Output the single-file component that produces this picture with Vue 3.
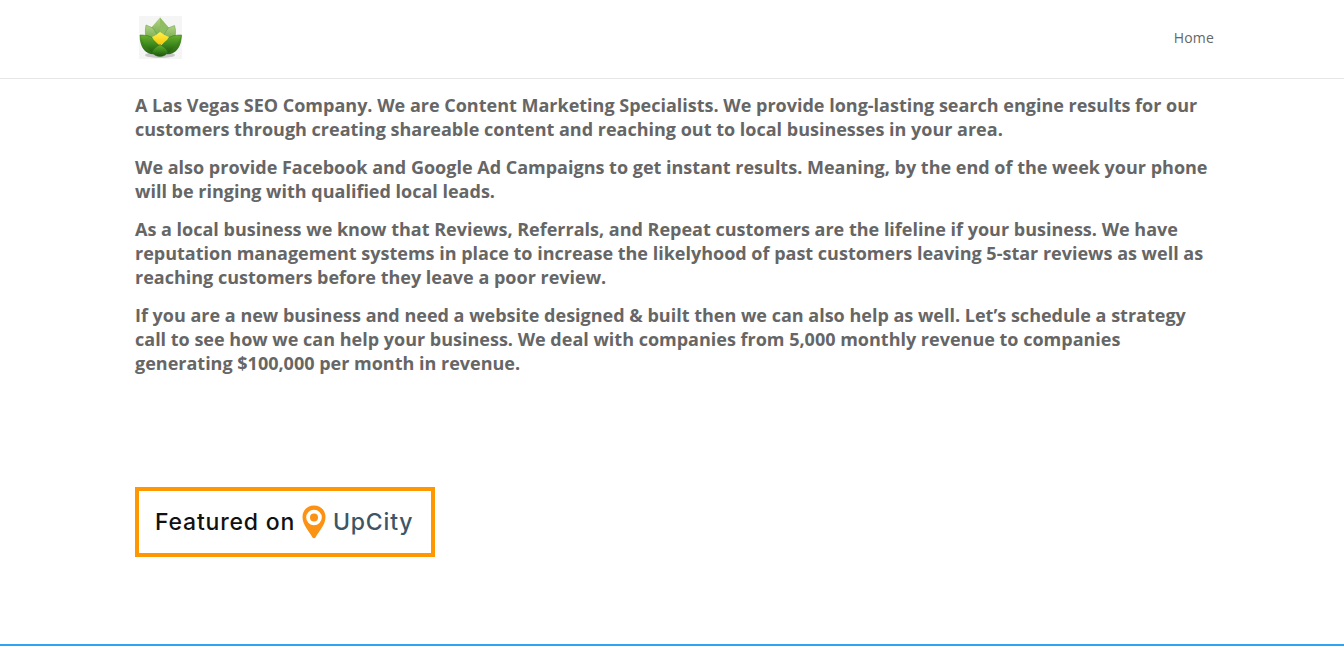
<script setup>
const paragraphs = [
  'A Las Vegas SEO Company. We are Content Marketing Specialists. We provide long-lasting search engine results for our customers through creating shareable content and reaching out to local businesses in your area.',
  'We also provide Facebook and Google Ad Campaigns to get instant results. Meaning, by the end of the week your phone will be ringing with qualified local leads.',
  'As a local business we know that Reviews, Referrals, and Repeat customers are the lifeline if your business. We have reputation management systems in place to increase the likelyhood of past customers leaving 5-star reviews as well as reaching customers before they leave a poor review.',
  'If you are a new business and need a website designed & built then we can also help as well. Let’s schedule a strategy call to see how we can help your business. We deal with companies from 5,000 monthly revenue to companies generating $100,000 per month in revenue.'
]
</script>

<template>
  <div class="page">
    <header class="site-header">
      <div class="container header-row">
        <svg class="logo" width="43" height="43" viewBox="0 0 43 43">
          <defs>
            <linearGradient id="leafDark" x1="0" y1="0" x2="0" y2="1">
              <stop offset="0" stop-color="#6cb032" />
              <stop offset="0.5" stop-color="#3d8a1c" />
              <stop offset="1" stop-color="#1c520e" />
            </linearGradient>
            <linearGradient id="leafShade" x1="0" y1="0" x2="0" y2="1">
              <stop offset="0" stop-color="#549a26" />
              <stop offset="1" stop-color="#2a6a14" />
            </linearGradient>
            <linearGradient id="leafLight" x1="0" y1="0" x2="0" y2="1">
              <stop offset="0" stop-color="#b2d386" />
              <stop offset="1" stop-color="#74a94a" />
            </linearGradient>
            <linearGradient id="heart" x1="0" y1="0" x2="0" y2="1">
              <stop offset="0" stop-color="#fff24e" />
              <stop offset="1" stop-color="#f5c400" />
            </linearGradient>
          </defs>
          <rect width="43" height="43" fill="#f5f5f5" />
          <ellipse cx="21" cy="39" rx="15" ry="3" fill="#9a9a9a" opacity="0.5" />
          <!-- back leaves -->
          <path d="M21 1.5 L30 12 L27 21 L15 21 L12 12 Z" fill="url(#leafLight)" />
          <path d="M21 1.5 L30 12 L27 21 L21 21 Z" fill="#8fbd62" />
          <path d="M7 9 L14 12 L20 22 L8 24 C6 19 6 14 7 9 Z" fill="url(#leafLight)" stroke="#5f9a38" stroke-width="0.5" />
          <path d="M35.5 9.5 L29 12 L23 22 L35 24 C37 19 37 14 35.5 9.5 Z" fill="url(#leafLight)" stroke="#5f9a38" stroke-width="0.5" />
          <!-- front leaves -->
          <path d="M1 19 C7 19 13 20 16 24 L21 30 L15 38 C7 38 1 32 1 19 Z" fill="url(#leafDark)" stroke="#2a6a14" stroke-width="0.5" />
          <path d="M1 19 C4 27 8 33 15 38 C7 38 1 32 1 19 Z" fill="url(#leafShade)" />
          <path d="M42.5 19 C36 19 30 20 27 24 L22 30 L28 38 C36 38 42 32 42.5 19 Z" fill="url(#leafDark)" stroke="#2a6a14" stroke-width="0.5" />
          <path d="M42.5 19 C39 27 35 33 28 38 C36 38 42 32 42.5 19 Z" fill="url(#leafShade)" />
          <path d="M13 21 C16 20 18 18 21 16 C24 18 27 20 30 21 C28 25 24 27 21 29.5 C18 27 15 25 13 21 Z" fill="url(#heart)" />
          <path d="M21 28.5 C24 30 28 33 29 36.5 C27 39 24 40.5 21 40.5 C18 40.5 15 39 13 36.5 C14 33 18 30 21 28.5 Z" fill="url(#leafDark)" stroke="#2a6a14" stroke-width="0.5" />
        </svg>
        <nav class="nav"><a class="nav-link">Home</a></nav>
      </div>
    </header>

    <main class="content container">
      <p v-for="(text, i) in paragraphs" :key="i" class="para">{{ text }}</p>

      <div class="badge">
        <span class="badge-text">Featured on</span>
        <svg class="pin" width="26" height="34" viewBox="0 0 26 34">
          <path d="M13 0.5 C6 0.5 1.5 5.5 1.5 12 C1.5 20 8 26 11.5 32.5 C12.2 33.6 13.8 33.6 14.5 32.5 C18 26 24.5 20 24.5 12 C24.5 5.5 20 0.5 13 0.5 Z" fill="#fb9213" />
          <circle cx="13" cy="12.5" r="7.8" fill="#fff" />
          <circle cx="13" cy="12.5" r="4" fill="#fb9213" />
        </svg>
        <span class="badge-brand">UpCity</span>
      </div>
    </main>

    <footer class="footer-line"></footer>
  </div>
</template>

<style scoped>
.page {
  display: flex;
  flex-direction: column;
  height: 646px;
  overflow: hidden;
  background: #fff;
  font-family: "Open Sans", Arial, sans-serif;
}

.container {
  width: 1074px;
  margin: 0 auto;
  box-sizing: border-box;
}

.site-header {
  height: 79px;
  flex: none;
  box-sizing: border-box;
  border-bottom: 1px solid #e6e6e6;
}

.header-row {
  display: flex;
  justify-content: space-between;
  align-items: flex-start;
  padding: 16px 0 0 4px;
}

.logo {
  display: block;
}

.nav {
  margin-right: -5px;
  padding-top: 10px;
}

.nav-link {
  font-size: 14px;
  font-weight: 400;
  line-height: 18px;
  letter-spacing: 0.2px;
  color: #666;
}

.content {
  flex: 1;
  padding-top: 14px;
}

.para {
  margin: 0 0 14px;
  font-size: 18px;
  font-weight: 700;
  line-height: 24px;
  color: #666;
}

.badge {
  display: flex;
  align-items: center;
  width: 300px;
  height: 70px;
  margin-top: 112px;
  box-sizing: border-box;
  padding-left: 16px;
  border: 4px solid #ff9800;
  font-family: Inter, Arial, sans-serif;
  font-size: 23px;
  font-weight: 500;
  letter-spacing: 0.8px;
}

.badge-text {
  color: #111;
}

.pin {
  margin: 0 6px;
  flex: none;
}

.badge-brand {
  color: #3d5566;
}

.footer-line {
  height: 2px;
  flex: none;
  background: #2ea3f2;
}
</style>
